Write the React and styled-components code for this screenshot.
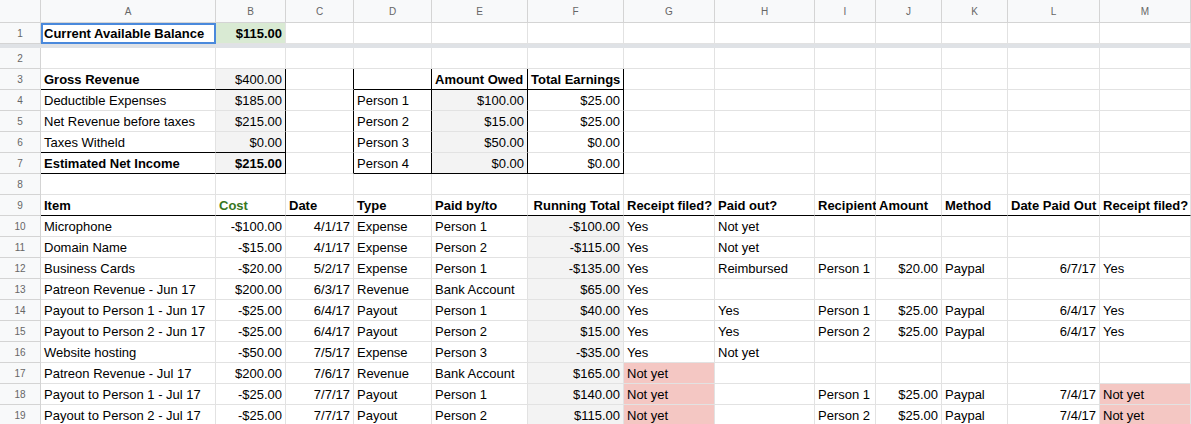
import React from 'react';
import styled, { createGlobalStyle, css } from 'styled-components';

const Global = createGlobalStyle`
  body { margin: 0; background: #fff; font-family: Arial, "Liberation Sans", sans-serif; }
`;

const COLS = [41, 175, 70, 68, 78, 96, 96, 91, 100, 61, 66, 66, 92, 91];
const LETTERS = ['A', 'B', 'C', 'D', 'E', 'F', 'G', 'H', 'I', 'J', 'K', 'L', 'M'];

const Sheet = styled.div`
  display: grid;
  grid-template-columns: ${COLS.map((w) => w + 'px').join(' ')};
  grid-template-rows: 23px 21px 4px;
  grid-auto-rows: 21px;
  width: 1191px;
  height: 424px;
  overflow: hidden;
  font-size: 13px;
  color: #000;
`;

const Head = styled.div`
  background: #f8f9fa;
  color: #666;
  font-size: 10px;
  display: flex;
  align-items: center;
  justify-content: center;
  border-right: 1px solid #d4d4d4;
  border-bottom: 1px solid #d4d4d4;
  box-sizing: border-box;
`;

const Freeze = styled.div`
  grid-column: 1 / -1;
  background: #dfe2e6;
`;

const Cell = styled.div`
  box-sizing: border-box;
  padding: 0 3px;
  display: flex;
  align-items: center;
  justify-content: ${(p) => (p.$right ? 'flex-end' : 'flex-start')};
  white-space: nowrap;
  font-weight: ${(p) => (p.$bold ? 700 : 400)};
  color: ${(p) => p.$color || '#000'};
  background: ${(p) => p.$bg || '#fff'};
  border-right: 1px solid ${(p) => (p.$br ? '#000' : '#e2e2e2')};
  border-bottom: 1px solid ${(p) => (p.$bb ? '#000' : '#e2e2e2')};
  ${(p) => p.$sel && css`outline: 2px solid #4a89dc; outline-offset: -2px;`}
`;

const G = '#f3f3f3';
const P = '#f4c7c3';

const c = (v, o = {}) => ({ v, ...o });

const rows = [];
rows[1] = [c('Current Available Balance', { bold: true, sel: true }), c('$115.00', { bold: true, right: true, bg: '#d9ead3' })];
rows[2] = [];
rows[3] = [
  c('Gross Revenue', { bold: true, bb: 1 }), c('$400.00', { right: true, bg: G, bb: 1, br: 1 }), c('', { br: 1 }),
  c('', { bb: 1, br: 1 }), c('Amount Owed', { bold: true, bb: 1, br: 1 }), c('Total Earnings', { bold: true, bb: 1, br: 1 }),
];
const mid = (a, b, d, e, f, last) => [
  c(a, { bold: last, bb: last }), c(b, { right: true, bg: G, br: 1, bold: last, bb: last }), c('', { br: 1 }),
  c(d, { br: 1, bb: last }), c(e, { right: true, bg: G, br: 1, bb: last }), c(f, { right: true, br: 1, bb: last }),
];
rows[4] = mid('Deductible Expenses', '$185.00', 'Person 1', '$100.00', '$25.00');
rows[5] = mid('Net Revenue before taxes', '$215.00', 'Person 2', '$15.00', '$25.00');
rows[6] = mid('Taxes Witheld', '$0.00', 'Person 3', '$50.00', '$0.00');
rows[6][0].bb = 1; rows[6][1].bb = 1;
rows[7] = mid('Estimated Net Income', '$215.00', 'Person 4', '$0.00', '$0.00', true);
rows[8] = [];
rows[9] = ['Item', 'Cost', 'Date', 'Type', 'Paid by/to', 'Running Total', 'Receipt filed?', 'Paid out?', 'Recipient', 'Amount', 'Method', 'Date Paid Out', 'Receipt filed?']
  .map((t, i) => c(t, { bold: true, bb: 1, color: i === 1 ? '#38761d' : undefined, right: i === 5 }));

const data = [
  ['Microphone', '-$100.00', '4/1/17', 'Expense', 'Person 1', '-$100.00', 'Yes', 'Not yet'],
  ['Domain Name', '-$15.00', '4/1/17', 'Expense', 'Person 2', '-$115.00', 'Yes', 'Not yet'],
  ['Business Cards', '-$20.00', '5/2/17', 'Expense', 'Person 1', '-$135.00', 'Yes', 'Reimbursed', 'Person 1', '$20.00', 'Paypal', '6/7/17', 'Yes'],
  ['Patreon Revenue - Jun 17', '$200.00', '6/3/17', 'Revenue', 'Bank Account', '$65.00', 'Yes'],
  ['Payout to Person 1 - Jun 17', '-$25.00', '6/4/17', 'Payout', 'Person 1', '$40.00', 'Yes', 'Yes', 'Person 1', '$25.00', 'Paypal', '6/4/17', 'Yes'],
  ['Payout to Person 2 - Jun 17', '-$25.00', '6/4/17', 'Payout', 'Person 2', '$15.00', 'Yes', 'Yes', 'Person 2', '$25.00', 'Paypal', '6/4/17', 'Yes'],
  ['Website hosting', '-$50.00', '7/5/17', 'Expense', 'Person 3', '-$35.00', 'Yes', 'Not yet'],
  ['Patreon Revenue - Jul 17', '$200.00', '7/6/17', 'Revenue', 'Bank Account', '$165.00', 'Not yet'],
  ['Payout to Person 1 - Jul 17', '-$25.00', '7/7/17', 'Payout', 'Person 1', '$140.00', 'Not yet', '', 'Person 1', '$25.00', 'Paypal', '7/4/17', 'Not yet'],
  ['Payout to Person 2 - Jul 17', '-$25.00', '7/7/17', 'Payout', 'Person 2', '$115.00', 'Not yet', '', 'Person 2', '$25.00', 'Paypal', '7/4/17', 'Not yet'],
];
const RIGHT = new Set([1, 2, 5, 9, 11]);
data.forEach((r, i) => {
  rows[10 + i] = r.map((t, j) =>
    c(t, {
      right: RIGHT.has(j),
      bg: j === 5 ? G : (j === 6 || j === 12) && t === 'Not yet' ? P : undefined,
    })
  );
});

export default function App() {
  return (
    <>
      <Global />
      <Sheet>
        <Head />
        {LETTERS.map((l) => <Head key={l}>{l}</Head>)}
        {rows.slice(1).map((r, idx) => {
          const n = idx + 1;
          return (
            <React.Fragment key={n}>
              <Head>{n}</Head>
              {LETTERS.map((_, j) => {
                const cell = r[j] || { v: '' };
                return (
                  <Cell key={j} $right={cell.right} $bold={cell.bold} $bg={cell.bg} $color={cell.color}
                    $bb={cell.bb} $br={cell.br} $sel={cell.sel}>
                    {cell.v}
                  </Cell>
                );
              })}
              {n === 1 && <Freeze />}
            </React.Fragment>
          );
        })}
      </Sheet>
    </>
  );
}
